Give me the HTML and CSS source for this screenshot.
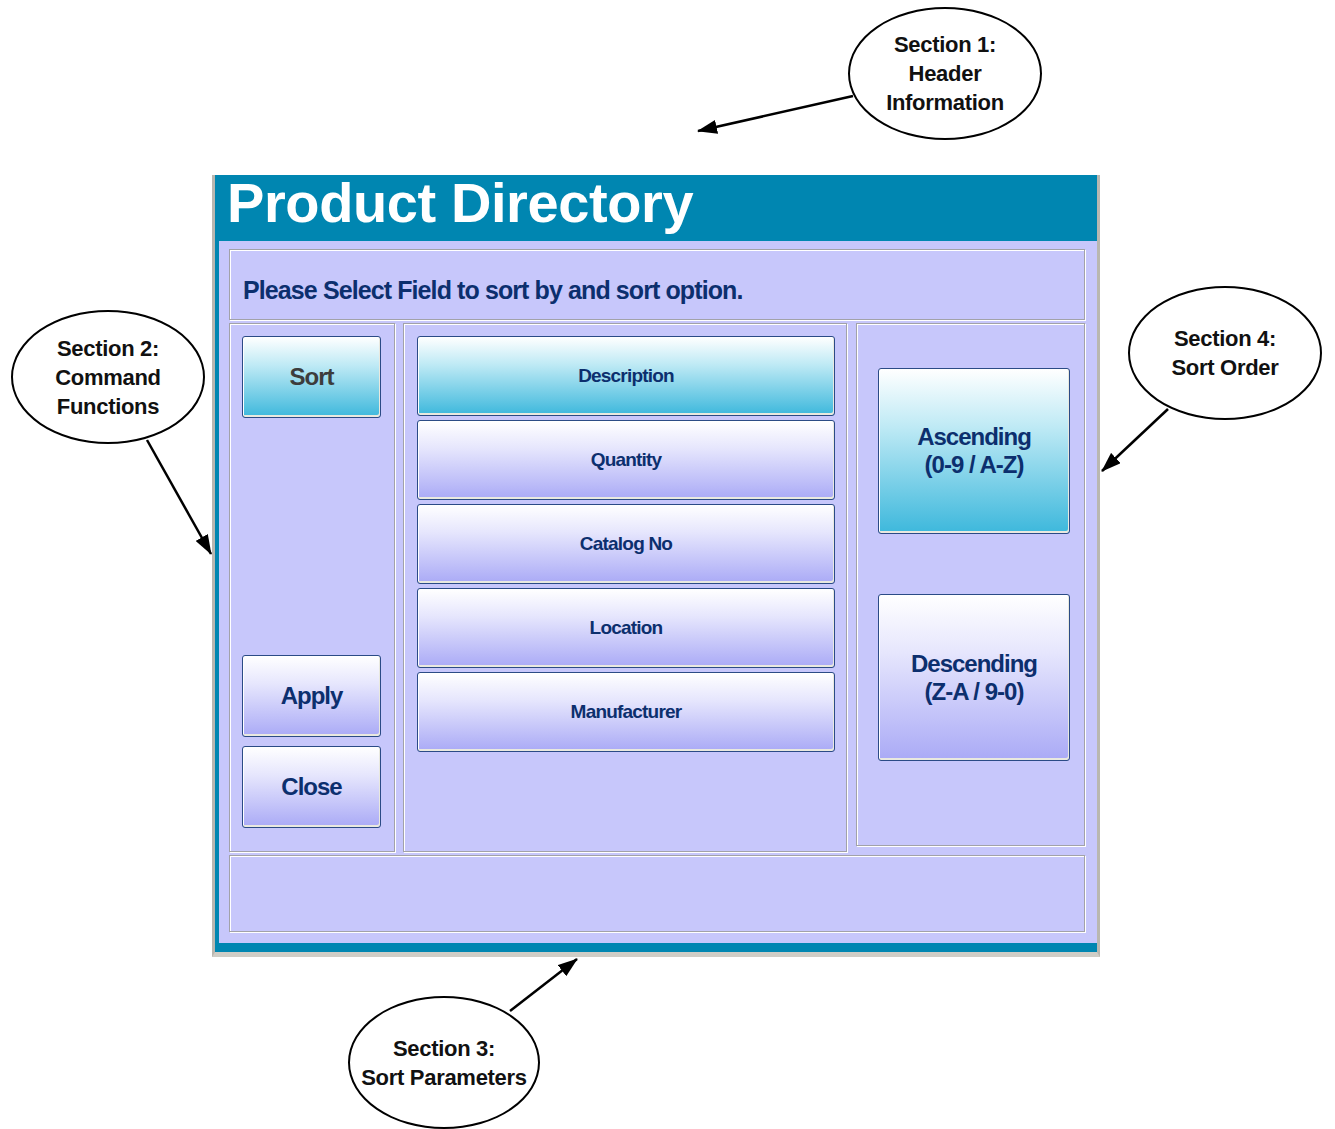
FILE: index.html
```html
<!DOCTYPE html>
<html lang="en">
<head>
    <meta charset="UTF-8">
    <meta name="viewport" content="width=device-width, initial-scale=1.0">
    <title>Product Directory</title>
    <link rel="stylesheet" href="styles.css">
</head>
<body>
    <div class="page">
        <div class="window">
            <div class="titlebar"><h1>Product Directory</h1></div>
            <div class="content">
                <div class="panel prompt">Please Select Field to sort by and sort option.</div>
                <div class="row">
                    <!-- command functions -->
                    <div class="panel commands">
                        <button class="btn cyan cmd sort">Sort</button>
                        <div class="cmd-bottom">
                            <button class="btn cmd">Apply</button>
                            <button class="btn cmd">Close</button>
                        </div>
                    </div>
                    <!-- sort parameters -->
                    <div class="panel fields">
                        <button class="btn cyan field">Description</button>
                        <button class="btn field">Quantity</button>
                        <button class="btn field">Catalog No</button>
                        <button class="btn field">Location</button>
                        <button class="btn field">Manufacturer</button>
                    </div>
                    <!-- sort order -->
                    <div class="panel order">
                        <button class="btn cyan big asc">Ascending<br>(0-9 / A-Z)</button>
                        <button class="btn big desc">Descending<br>(Z-A / 9-0)</button>
                    </div>
                </div>
                <div class="panel status"></div>
            </div>
        </div>

        <svg class="arrows" width="1335" height="1129" viewBox="0 0 1335 1129">
            <defs>
                <marker id="head" markerUnits="userSpaceOnUse" markerWidth="20" markerHeight="14" refX="19" refY="7" orient="auto">
                    <path d="M0,0 L20,7 L0,14 z" fill="#000"/>
                </marker>
            </defs>
            <line x1="853" y1="96" x2="698" y2="131" marker-end="url(#head)"/>
            <line x1="147" y1="440" x2="211" y2="554" marker-end="url(#head)"/>
            <line x1="510" y1="1011" x2="577" y2="959" marker-end="url(#head)"/>
            <line x1="1168" y1="409" x2="1102" y2="471" marker-end="url(#head)"/>
        </svg>

        <div class="callout c1">Section 1:<br>Header<br>Information</div>
        <div class="callout c2">Section 2:<br>Command<br>Functions</div>
        <div class="callout c3">Section 3:<br>Sort Parameters</div>
        <div class="callout c4">Section 4:<br>Sort Order</div>
    </div>
</body>
</html>
```
FILE: styles.css
```css
body{
    margin: 0;
    background-color: #ffffff;
    font-family: "Liberation Sans", Arial, sans-serif;
}
.page{
    position: relative;
    width: 1335px;
    height: 1129px;
    overflow: hidden;
}

/* the application window */
.window{
    box-sizing: border-box;
    width: 888px;
    height: 782px;
    margin: 175px 0 0 212px;
    background-color: #0086b1;
    border-left: 3px solid #b9b7b0;
    border-right: 3px solid #b9b7b0;
    border-bottom: 5px solid #cfcdc6;
    display: flex;
    flex-direction: column;
}
.titlebar{
    height: 66px;
    flex: none;
}
.titlebar h1{
    margin: 0;
    padding-left: 12px;
    color: #ffffff;
    font-size: 56px;
    line-height: 56px;
    font-weight: bold;
    letter-spacing: -0.4px;
}
.content{
    box-sizing: border-box;
    height: 702px;
    margin-left: 4px;
    padding: 8px 12px 11px 10px;
    background-color: #c7c7fb;
    display: flex;
    flex-direction: column;
    gap: 3px;
}
.panel{
    box-sizing: border-box;
    border: 1px solid #a2a2a8;
    box-shadow: inset 1px 1px 0 #ffffff, 1px 1px 0 #ffffff;
}
.prompt{
    height: 71px;
    padding: 26px 0 0 13px;
    color: #0c2f6e;
    font-size: 25px;
    line-height: 28px;
    font-weight: bold;
    letter-spacing: -0.9px;
}
.row{
    height: 529px;
    display: flex;
    gap: 8px;
    align-items: flex-start;
}
.commands{
    width: 166px;
    height: 529px;
    padding: 12px 13px 23px 12px;
    display: flex;
    flex-direction: column;
}
.cmd-bottom{
    margin-top: auto;
    display: flex;
    flex-direction: column;
    gap: 9px;
}
.fields{
    width: 444px;
    height: 529px;
    padding: 12px 11px 0 13px;
    display: flex;
    flex-direction: column;
    gap: 4px;
}
.order{
    width: 229px;
    height: 523px;
    margin-left: 1px;
    padding: 44px 14px 0 21px;
    display: flex;
    flex-direction: column;
}
.status{
    height: 77px;
}

/* buttons */
.btn{
    box-sizing: border-box;
    display: flex;
    align-items: center;
    justify-content: center;
    margin: 0;
    padding: 0;
    border: 1px solid #2b4b86;
    border-radius: 3px;
    background: linear-gradient(#ffffff 0%, #e6e6fd 35%, #aaaaf6 100%);
    box-shadow: inset -1px -2px 0 #e9e9df, inset 1px 1px 0 #ffffff;
    color: #0c2f6e;
    font-family: "Liberation Sans", Arial, sans-serif;
    font-weight: bold;
    text-align: center;
}
.btn.cyan{
    background: linear-gradient(#ffffff 0%, #bfeaf5 35%, #3db8dc 100%);
}
.cmd{
    width: 139px;
    height: 82px;
    font-size: 24px;
    letter-spacing: -1px;
}
.sort{
    color: #3c3c3c;
}
.field{
    width: 418px;
    height: 80px;
    font-size: 19px;
    letter-spacing: -0.8px;
}
.big{
    width: 192px;
    font-size: 24px;
    line-height: 28px;
    letter-spacing: -1px;
}
.asc{
    height: 166px;
}
.desc{
    height: 167px;
    margin-top: 60px;
}

/* annotations drawn over the screenshot */
.arrows{
    position: absolute;
    left: 0;
    top: 0;
    pointer-events: none;
}
.arrows line{
    stroke: #000000;
    stroke-width: 2.5;
}
.callout{
    position: absolute;
    box-sizing: border-box;
    width: 194px;
    height: 134px;
    border: 2px solid #000000;
    border-radius: 50%;
    background-color: #ffffff;
    display: flex;
    align-items: center;
    justify-content: center;
    text-align: center;
    color: #111111;
    font-size: 22px;
    line-height: 29px;
    font-weight: bold;
    letter-spacing: -0.3px;
}
.c1{ left: 848px; top: 7px; height: 133px; }
.c2{ left: 11px; top: 310px; }
.c3{ left: 348px; top: 996px; width: 192px; height: 133px; }
.c4{ left: 1128px; top: 286px; }
```
